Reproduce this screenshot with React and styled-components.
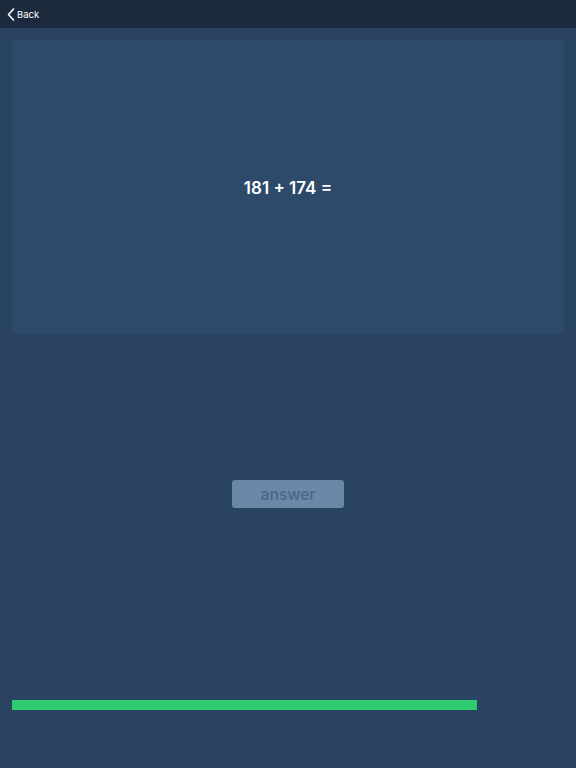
import React from "react";
import styled, { createGlobalStyle } from "styled-components";

const Global = createGlobalStyle`
  html, body { margin: 0; padding: 0; background: #2a4361; }
  body { font-family: Inter, "Noto Sans", sans-serif; }
`;

const Page = styled.div`
  min-height: 768px;
  display: flex;
  flex-direction: column;
  background: #2a4361;
`;

const Header = styled.header`
  height: 28px;
  background: #1b2a3c;
  display: flex;
  align-items: center;
  padding-left: 7px;
`;

const BackButton = styled.button`
  display: flex;
  align-items: center;
  gap: 2px;
  background: none;
  border: none;
  padding: 0;
  color: #ffffff;
  font-family: Inter, sans-serif;
  font-size: 9.5px;
  cursor: pointer;
`;

const Main = styled.main`
  display: flex;
  flex-direction: column;
  padding: 12px 12px 0;
`;

const Card = styled.section`
  height: 294px;
  background: #2d4a6b;
  display: flex;
  align-items: center;
  justify-content: center;
`;

const Question = styled.div`
  color: #ffffff;
  font-size: 17px;
  font-weight: 600;
  padding-top: 2px;
`;

const AnswerButton = styled.button`
  align-self: center;
  margin-top: 146px;
  width: 112px;
  height: 28px;
  border: none;
  border-radius: 3px;
  background: #6c88a9;
  color: #4d6889;
  font-family: Inter, sans-serif;
  font-size: 15.5px;
  font-weight: 600;
  padding-top: 1px;
`;

const Track = styled.div`
  margin-top: 192px;
  height: 10px;
`;

const Bar = styled.div`
  height: 100%;
  background: #2ecc71;
`;

export default function App() {
  return (
    <>
      <Global />
      <Page>
        <Header>
          <BackButton>
            <svg width="8" height="13" viewBox="0 0 8 13">
              <path d="M6.5 1 L1.5 6.5 L6.5 12" fill="none" stroke="#fff" strokeWidth="1.6" strokeLinecap="round" strokeLinejoin="round" />
            </svg>
            Back
          </BackButton>
        </Header>
        <Main>
          <Card>
            <Question>181 + 174 =</Question>
          </Card>
          <AnswerButton disabled>answer</AnswerButton>
          <Track>
            <Bar style={{ width: `${(465 / 552) * 100}%` }} />
          </Track>
        </Main>
      </Page>
    </>
  );
}
